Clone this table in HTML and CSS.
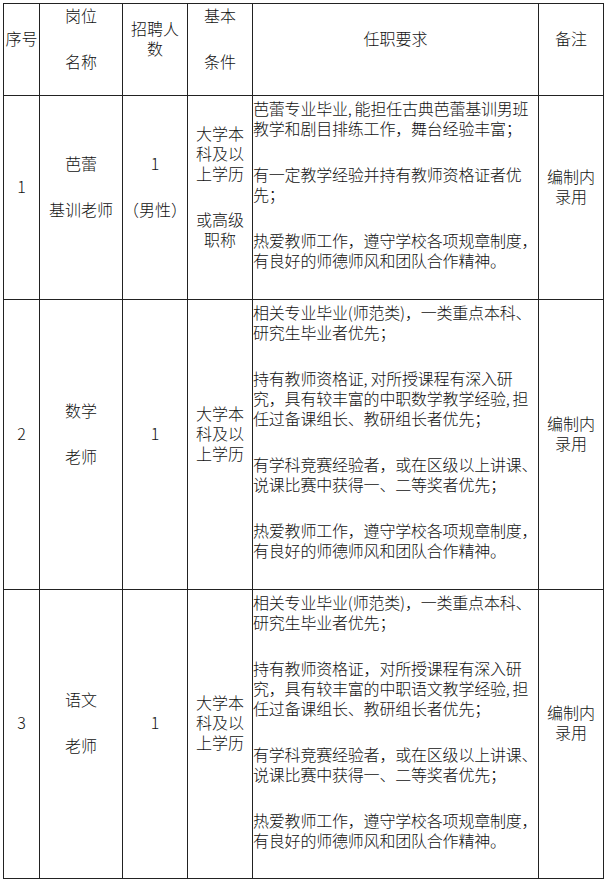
FILE: index.html
```html
<!DOCTYPE html>
<html lang="zh-CN">
<head>
<meta charset="utf-8">
<title>招聘岗位</title>
<link rel="stylesheet" href="styles.css">
</head>
<body>
<table class="grid">
  <colgroup>
    <col class="c-no">
    <col class="c-post">
    <col class="c-num">
    <col class="c-basic">
    <col class="c-req">
    <col class="c-note">
  </colgroup>
  <tr class="r-head">
    <td class="mid"><p>序号</p></td>
    <td class="mid"><p>岗位</p><p>名称</p></td>
    <td class="mid"><p>招聘人<br>数</p></td>
    <td class="mid"><p>基本</p><p>条件</p></td>
    <td class="mid"><p>任职要求</p></td>
    <td class="mid"><p>备注</p></td>
  </tr>
  <tr class="r-1">
    <td class="mid"><p>1</p></td>
    <td class="mid"><p>芭蕾</p><p>基训老师</p></td>
    <td class="mid"><p>1</p><p>（男性）</p></td>
    <td class="mid"><p>大学本<br>科及以<br>上学历</p><p>或高级<br>职称</p></td>
    <td class="req">
      <p>芭蕾专业毕业,&#8201;能担任古典芭蕾基训男班<br>教学和剧目排练工作，舞台经验丰富；</p>
      <p>有一定教学经验并持有教师资格证者优<br>先；</p>
      <p>热爱教师工作，遵守学校各项规章制度，<br>有良好的师德师风和团队合作精神。</p>
    </td>
    <td class="mid"><p>编制内<br>录用</p></td>
  </tr>
  <tr class="r-2">
    <td class="mid"><p>2</p></td>
    <td class="mid"><p>数学</p><p>老师</p></td>
    <td class="mid"><p>1</p></td>
    <td class="mid"><p>大学本<br>科及以<br>上学历</p></td>
    <td class="req">
      <p>相关专业毕业(师范类)，一类重点本科、<br>研究生毕业者优先；</p>
      <p>持有教师资格证,&#8201;对所授课程有深入研<br>究，具有较丰富的中职数学教学经验,&#8201;担<br>任过备课组长、教研组长者优先；</p>
      <p>有学科竞赛经验者，或在区级以上讲课、<br>说课比赛中获得一、二等奖者优先；</p>
      <p>热爱教师工作，遵守学校各项规章制度，<br>有良好的师德师风和团队合作精神。</p>
    </td>
    <td class="mid"><p>编制内<br>录用</p></td>
  </tr>
  <tr class="r-3">
    <td class="mid"><p>3</p></td>
    <td class="mid"><p>语文</p><p>老师</p></td>
    <td class="mid"><p>1</p></td>
    <td class="mid"><p>大学本<br>科及以<br>上学历</p></td>
    <td class="req">
      <p>相关专业毕业(师范类)，一类重点本科、<br>研究生毕业者优先；</p>
      <p>持有教师资格证，对所授课程有深入研<br>究，具有较丰富的中职语文教学经验,&#8201;担<br>任过备课组长、教研组长者优先；</p>
      <p>有学科竞赛经验者，或在区级以上讲课、<br>说课比赛中获得一、二等奖者优先；</p>
      <p>热爱教师工作，遵守学校各项规章制度，<br>有良好的师德师风和团队合作精神。</p>
    </td>
    <td class="mid"><p>编制内<br>录用</p></td>
  </tr>
</table>
</body>
</html>
```
FILE: styles.css
```css
html, body {
  margin: 0;
  padding: 0;
  background: #ffffff;
}

body {
  padding: 3px 0 0 3px;
  font-family: "Noto Sans CJK SC", "Noto Sans", sans-serif;
  font-size: 16px;
  font-weight: 300;
  line-height: 20px;
  color: #111;
}

.grid {
  border-collapse: collapse;
  table-layout: fixed;
  width: 600px;
  border: 1px solid #222;
}

.grid td {
  border: 1px solid #222;
  padding: 0;
  white-space: nowrap;
  overflow: visible;
}

.c-no { width: 36px; }
.c-post { width: 83px; }
.c-num { width: 65px; }
.c-basic { width: 65px; }
.c-req { width: 286px; }
.c-note { width: 65px; }

.r-head { height: 92px; }
.r-1 { height: 204px; }
.r-2 { height: 290px; }
.r-3 { height: 289px; }

.grid p {
  margin: 0;
}

.grid p + p {
  margin-top: 26px;
}

.mid {
  vertical-align: middle;
  text-align: center;
  padding-bottom: 24px !important;
}

.req {
  vertical-align: top;
  text-align: left;
  padding-top: 2px !important;
  letter-spacing: -0.2px;
}
```
